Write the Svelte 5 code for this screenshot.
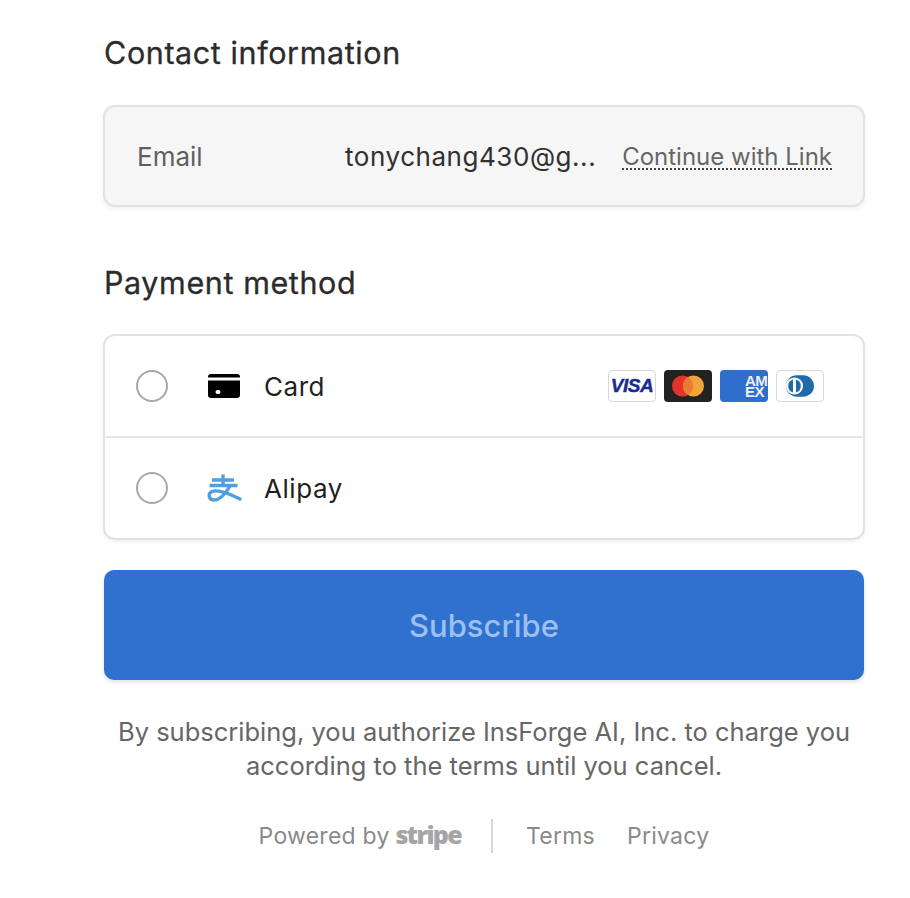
<script>
	const brands = ['visa', 'mc', 'amex', 'diners'];
</script>

<div class="page">
	<h2 class="first">Contact information</h2>
	<div class="email-box">
		<span class="email-label">Email</span>
		<span class="email-value">tonychang430@g...</span>
		<a class="link" href="#top">Continue with Link</a>
	</div>

	<h2 class="second">Payment method</h2>
	<div class="methods">
		<div class="method">
			<span class="radio"></span>
			<span class="method-icon">
				<svg width="32" height="24" viewBox="0 0 32 24">
					<path fill="#000" d="M3 0h26a3 3 0 0 1 3 3v.5H0V3a3 3 0 0 1 3-3zM0 6.5h32V21a3 3 0 0 1-3 3H3a3 3 0 0 1-3-3zm9.5 9.5a2 2 0 0 0 0 4h1a2 2 0 0 0 0-4z" />
				</svg>
			</span>
			<span class="method-name">Card</span>
			<div class="brands">
				{#each brands as b}
					<span class="brand {b}">
						{#if b === 'visa'}
							<span class="visa-text">VISA</span>
						{:else if b === 'mc'}
							<svg width="34" height="22" viewBox="0 0 34 22">
								<circle cx="11.5" cy="11" r="10.5" fill="#e2342b" />
								<circle cx="22.5" cy="11" r="10.5" fill="#f0a53c" />
								<path d="M17 2a10.5 10.5 0 0 1 0 18a10.5 10.5 0 0 1 0-18z" fill="#ed7a2e" />
							</svg>
						{:else if b === 'amex'}
							<span class="amex-text">AM<br />EX</span>
						{:else}
							<svg width="46" height="30" viewBox="0 0 46 30">
								<rect x="9" y="4.3" width="28" height="21.4" rx="10.7" fill="#1f6aa8" />
								<circle cx="17.5" cy="15" r="8.6" fill="#fff" />
								<path d="M16 8.5a6.8 6.8 0 0 0 0 13zM19 8.5a6.8 6.8 0 0 1 0 13z" fill="#1f6aa8" />
							</svg>
						{/if}
					</span>
				{/each}
			</div>
		</div>
		<div class="method">
			<span class="radio"></span>
			<span class="method-icon">
				<svg width="36" height="32" viewBox="0 0 36 32" fill="none" stroke="#4f9fe0" stroke-width="3.4">
					<path d="M17 2.5v11M6 8h22M3.5 13.5h28" />
					<path d="M24 14C20 21 14 28 8 28C2.5 28 1.5 21.5 6 19.5C11 17.5 19 19.5 34 27" stroke-linecap="round" />
				</svg>
			</span>
			<span class="method-name">Alipay</span>
		</div>
	</div>

	<button class="subscribe">Subscribe</button>

	<p class="terms">By subscribing, you authorize InsForge AI, Inc. to charge you according to the terms until you cancel.</p>

	<div class="footer">
		<span class="powered">Powered by <span class="stripe">stripe</span></span>
		<span class="sep"></span>
		<span>Terms</span>
		<span class="privacy">Privacy</span>
	</div>
</div>

<style>
	:global(body) {
		background: #fff;
		font-family: Inter, "Liberation Sans", sans-serif;
	}
	.page {
		width: 760px;
		margin-left: 104px;
		padding-top: 35px;
		color: #30313d;
	}
	h2 {
		margin: 0;
		font-size: 30.5px;
		line-height: 36px;
		font-weight: 400;
		letter-spacing: 0.6px;
		color: #2c2c2c;
		-webkit-text-stroke: 0.3px #2c2c2c;
	}
	.email-box {
		margin: 34px -1px 0;
		height: 102px;
		box-sizing: border-box;
		display: flex;
		align-items: center;
		padding: 0 31px 0 32px;
		background: #f6f6f6;
		border: 2px solid #e2e2e2;
		border-radius: 12px;
		box-shadow: 0 2px 4px rgba(0, 0, 0, 0.06);
	}
	.email-label {
		width: 208px;
		font-size: 26px;
		color: #5f5f5f;
	}
	.email-value {
		font-size: 26px;
		letter-spacing: 0.55px;
		color: #303030;
	}
	.link {
		margin-left: auto;
		margin-top: 4px;
		font-size: 24px;
		color: #666;
		text-decoration: none;
		border-bottom: 2px dotted #444;
		line-height: 22px;
	}
	.second {
		margin-top: 58px;
	}
	.methods {
		margin: 33px -1px 0;
		border: 2px solid #e2e2e2;
		border-radius: 12px;
		box-shadow: 0 2px 4px rgba(0, 0, 0, 0.06);
	}
	.method {
		height: 100px;
		box-sizing: border-box;
		display: flex;
		align-items: center;
		padding: 0 39px 0 31px;
		font-size: 26px;
	}
	.method + .method {
		height: 102px;
		border-top: 2px solid #e6e6e6;
	}
	.radio {
		width: 32px;
		height: 32px;
		box-sizing: border-box;
		border: 2px solid #a8a8a8;
		border-radius: 50%;
	}
	.method-icon {
		width: 36px;
		margin-left: 38px;
		display: flex;
		justify-content: center;
	}
	.method-name {
		margin-left: 22px;
		letter-spacing: 0.55px;
		color: #1f1f1f;
	}
	.brands {
		margin-left: auto;
		display: flex;
		gap: 8px;
	}
	.brand {
		width: 48px;
		height: 32px;
		box-sizing: border-box;
		border-radius: 4px;
		display: flex;
		align-items: center;
		justify-content: center;
		overflow: hidden;
	}
	.visa,
	.diners {
		background: #fff;
		border: 1px solid #d8d8d8;
	}
	.mc {
		background: #222;
	}
	.amex {
		background: #2f6fcb;
		justify-content: flex-start;
		padding-left: 25px;
	}
	.visa-text {
		font-family: "Liberation Sans", sans-serif;
		font-size: 19px;
		font-weight: 700;
		font-style: italic;
		letter-spacing: -0.4px;
		color: #1a2b8f;
		-webkit-text-stroke: 0.4px #1a2b8f;
	}
	.amex-text {
		font-family: "Liberation Sans", sans-serif;
		font-size: 15px;
		line-height: 11px;
		letter-spacing: -0.5px;
		font-weight: 700;
		color: #eaf1fb;
	}
	.subscribe {
		display: block;
		width: 100%;
		height: 110px;
		margin-top: 30px;
		border: none;
		border-radius: 10px;
		background: #3071cf;
		color: #9cc0f0;
		font-family: inherit;
		font-size: 31px;
		font-weight: 500;
		box-shadow: 0 2px 4px rgba(0, 0, 0, 0.12);
	}
	.terms {
		margin: 35px 0 0;
		text-align: center;
		font-size: 25.5px;
		line-height: 34px;
		color: #666;
	}
	.footer {
		margin-top: 36px;
		display: flex;
		justify-content: center;
		align-items: center;
		height: 34px;
		font-size: 23px;
		letter-spacing: 0.25px;
		color: #8a8a8a;
	}
	.powered {
		line-height: 34px;
	}
	.stripe {
		font-family: "Open Sans", sans-serif;
		font-weight: 800;
		font-size: 25px;
		line-height: 20px;
		letter-spacing: -1.7px;
		color: #a5a5a5;
		margin-left: -1px;
	}
	.sep {
		width: 2px;
		height: 34px;
		margin: 0 33px 0 30px;
		background: #d8d8d8;
	}
	.privacy {
		margin-left: 32px;
	}
</style>
